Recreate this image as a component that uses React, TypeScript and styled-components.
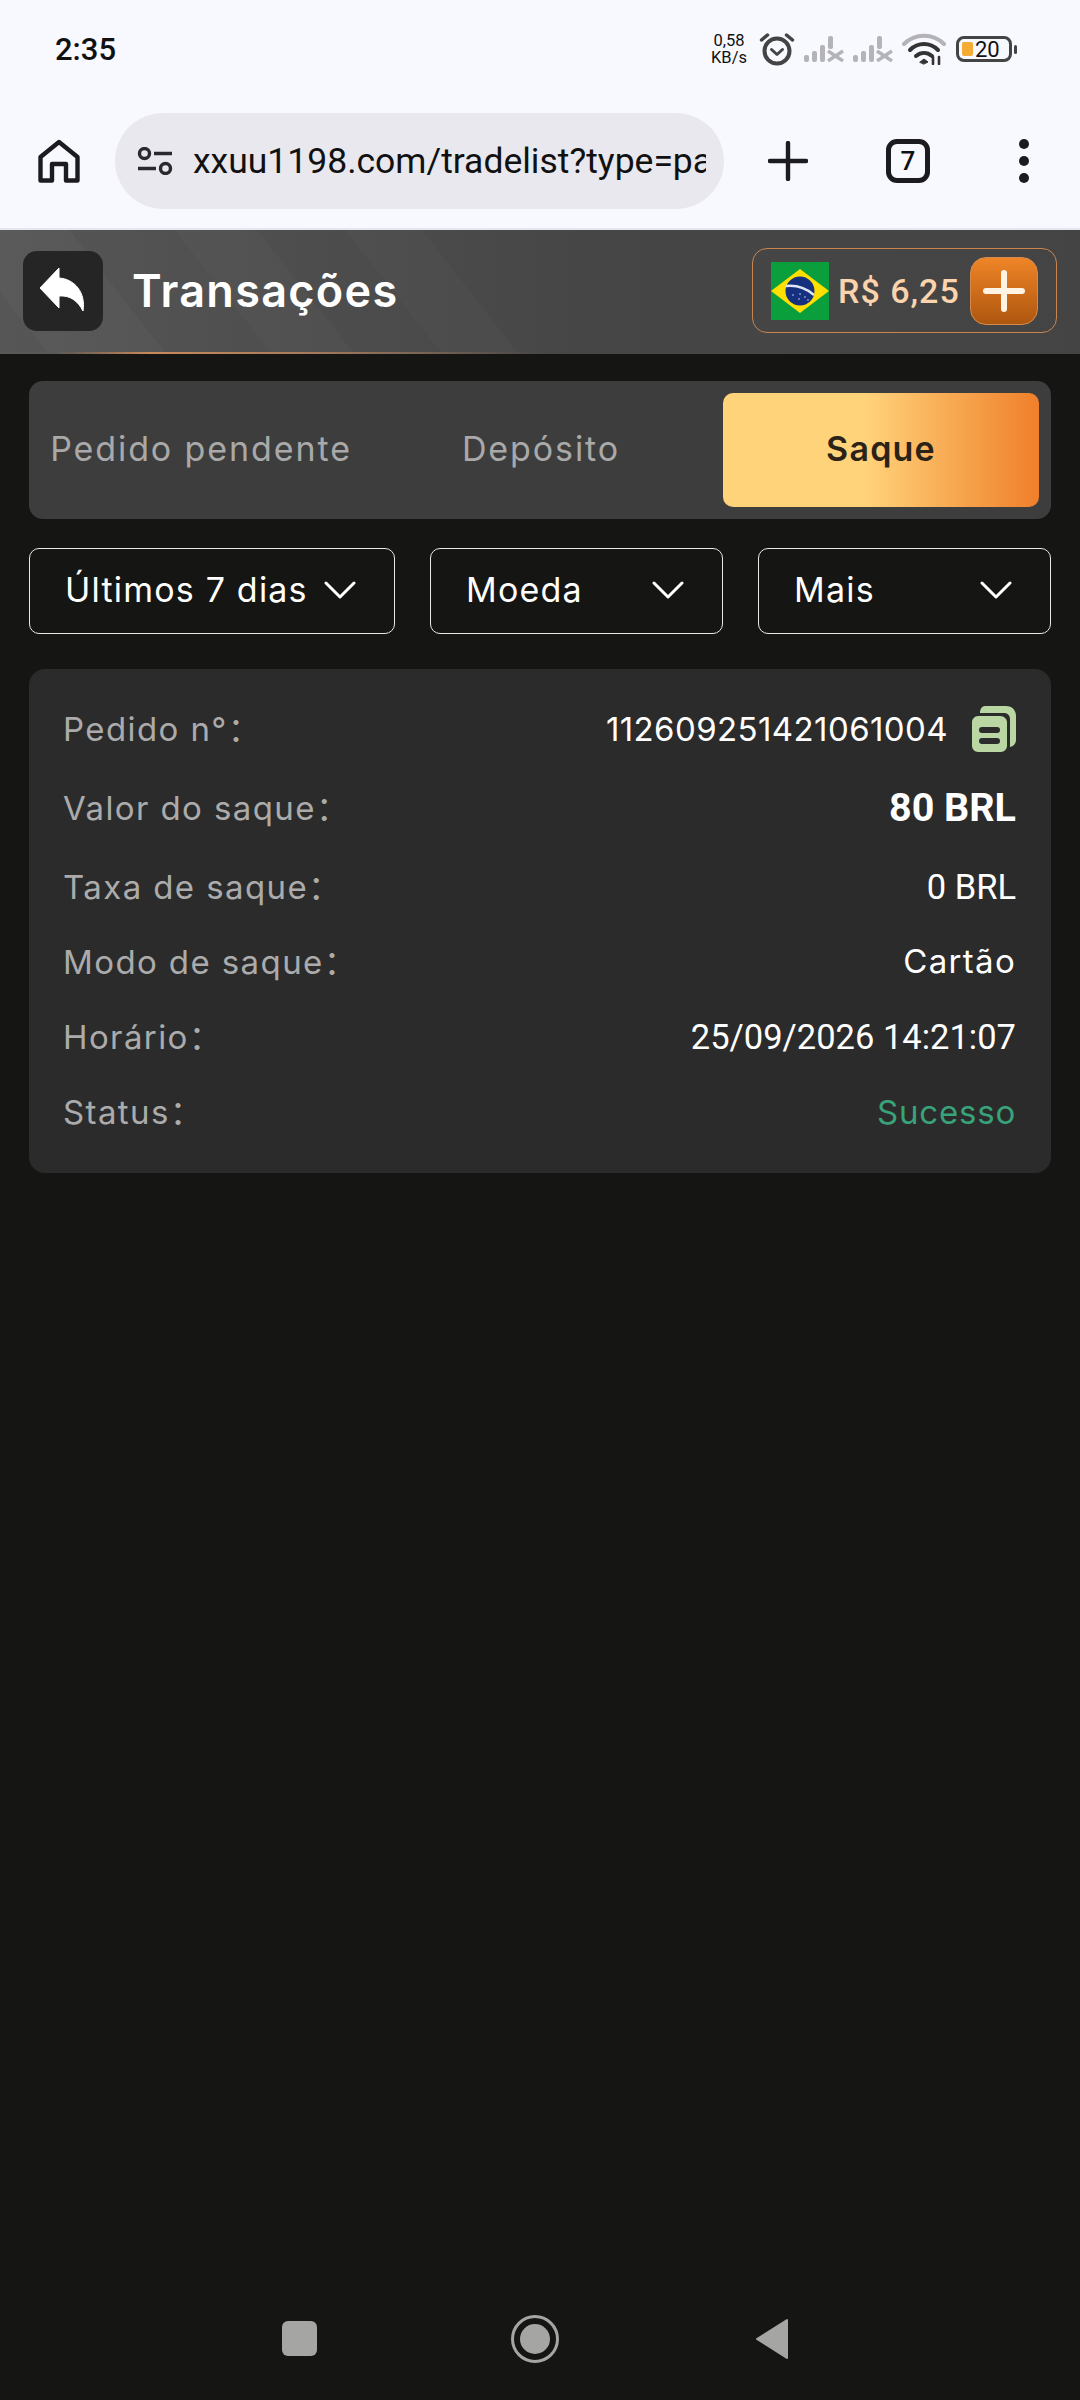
import React from 'react'
import styled, { createGlobalStyle } from 'styled-components'

const GlobalStyle = createGlobalStyle`
  html, body {
    margin: 0;
    padding: 0;
    background: #151513;
  }
  * {
    box-sizing: border-box;
  }
`

const Page = styled.div`
  width: 1080px;
  height: 2400px;
  display: flex;
  flex-direction: column;
  background: #151513;
  font-family: Inter, 'Noto Sans CJK SC', sans-serif;
  overflow: hidden;
`

const StatusBar = styled.div`
  height: 100px;
  flex-shrink: 0;
  display: flex;
  align-items: center;
  justify-content: space-between;
  padding: 0 63px 2px 55px;
  background: #f8f8ff;
`

const Clock = styled.span`
  font: 500 31px Roboto, sans-serif;
  color: #111;
`

const StatusIcons = styled.div`
  display: flex;
  align-items: center;
  gap: 9px;
`

const NetSpeed = styled.span`
  width: 38px;
  margin-right: 2px;
  font: 400 16.5px/17px Roboto, sans-serif;
  color: #111;
  text-align: center;
`

const BatteryWrap = styled.div`
  display: flex;
  align-items: center;
  gap: 2px;
  margin-left: 1px;
`

const BatteryBody = styled.div`
  width: 56px;
  height: 26px;
  display: flex;
  align-items: center;
  gap: 2px;
  padding: 3px;
  border: 3px solid #444;
  border-radius: 8px;
  font: 400 22px Roboto, sans-serif;
  color: #111;
`

const BatteryFill = styled.span`
  width: 11px;
  height: 100%;
  border-radius: 2px;
  background: #f5ac35;
`

const BatteryNub = styled.span`
  width: 3px;
  height: 9px;
  border-radius: 2px;
  background: #444;
`

const Toolbar = styled.div`
  height: 130px;
  flex-shrink: 0;
  display: flex;
  align-items: center;
  padding: 0 0 6px 38px;
  background: #f8f8ff;
  border-bottom: 2px solid #e6e6ee;
`

const HomeSlot = styled.div`
  width: 77px;
  display: flex;
`

const UrlPill = styled.div`
  width: 609px;
  height: 96px;
  display: flex;
  align-items: center;
  padding: 0 18px 0 22px;
  gap: 20px;
  border-radius: 48px;
  background: #e8e8ee;
`

const UrlText = styled.span`
  flex: 1;
  overflow: hidden;
  white-space: nowrap;
  font: 400 35.5px Roboto, sans-serif;
  color: #111;
`

const ToolbarButtons = styled.div`
  flex: 1;
  display: flex;
  align-items: center;
  padding-left: 44px;
`

const TabCount = styled.div`
  width: 44px;
  height: 44px;
  margin-left: 78px;
  display: flex;
  align-items: center;
  justify-content: center;
  border: 5px solid #1c1c20;
  border-radius: 11px;
  font: 500 26px Roboto, sans-serif;
  color: #111;
`

const MenuDots = styled.div`
  margin-left: 89px;
  display: flex;
  flex-direction: column;
  gap: 7px;
`

const MenuDot = styled.span`
  width: 10px;
  height: 10px;
  border-radius: 50%;
  background: #1c1c20;
`

const Header = styled.header`
  height: 124px;
  flex-shrink: 0;
  display: flex;
  align-items: center;
  justify-content: space-between;
  padding: 0 23px 1px 23px;
  border-bottom: 2px solid;
  border-image: linear-gradient(90deg, transparent 5%, #c98a5a 14%, #a87c5c 28%, transparent 50%) 1;
  background:
    linear-gradient(52deg,
      rgba(255,255,255,0) 0 4%,
      rgba(255,255,255,0.025) 4% 14%,
      rgba(255,255,255,0) 14% 23%,
      rgba(255,255,255,0.02) 23% 30%,
      rgba(255,255,255,0) 30% 37.5%,
      rgba(255,255,255,0.015) 37.5% 44%,
      rgba(255,255,255,0) 44% 100%),
    linear-gradient(90deg, #565656 0%, #4d4d4d 30%, #464646 55%, #444 100%);
`

const HeaderLeft = styled.div`
  display: flex;
  align-items: center;
  gap: 29px;
`

const BackButton = styled.button`
  width: 80px;
  height: 80px;
  display: flex;
  align-items: center;
  justify-content: center;
  padding: 0 2px 2px 0;
  border: 0;
  border-radius: 14px;
  background: #252525;
`

const Title = styled.h1`
  margin: 0;
  padding-bottom: 1px;
  font: 600 45px Inter, sans-serif;
  letter-spacing: 1.3px;
  color: #fff;
`

const Balance = styled.div`
  width: 305px;
  height: 85px;
  display: flex;
  align-items: center;
  padding: 0 18px;
  border: 1.5px solid #c98550;
  border-radius: 15px;
`

const BalanceText = styled.span`
  margin-left: 9px;
  flex: 1;
  font: 500 34px Roboto, sans-serif;
  letter-spacing: 1px;
  color: #fbd3ad;
  white-space: nowrap;
`

const AddButton = styled.button`
  width: 68px;
  height: 68px;
  flex-shrink: 0;
  display: flex;
  align-items: center;
  justify-content: center;
  padding: 0;
  border: 1px solid #d58a4c;
  border-radius: 16px;
  background: linear-gradient(180deg, #ef8527 0%, #ae560f 100%);
`

const Content = styled.main`
  flex: 1;
  display: flex;
  flex-direction: column;
  padding: 27px 29px 0;
`

const Tabs = styled.div`
  height: 138px;
  display: grid;
  grid-template-columns: repeat(3, 316px);
  gap: 24px;
  padding: 12px 12px 12px 14px;
  border-radius: 14px;
  background: #3d3d3d;
`

const Tab = styled.div<{ $active?: boolean }>`
  display: flex;
  align-items: center;
  justify-content: center;
  padding-bottom: 3px;
  border-radius: 10px;
  font-size: 34px;
  white-space: nowrap;
  letter-spacing: ${({ $active }) => ($active ? '1.2px' : '1.9px')};
  font-weight: ${({ $active }) => ($active ? 600 : 400)};
  color: ${({ $active }) => ($active ? '#2b2218' : '#a9a9a9')};
  background: ${({ $active }) =>
    $active ? 'linear-gradient(90deg, #ffd37a 0%, #ffd37a 45%, #f07f2a 100%)' : 'transparent'};
`

const Filters = styled.div`
  display: grid;
  grid-template-columns: 366px 293px 293px;
  gap: 35px;
  margin-top: 29px;
`

const Filter = styled.div`
  height: 86px;
  display: flex;
  align-items: center;
  justify-content: space-between;
  padding: 0 37px 3px 35px;
  border: 1.5px solid #e8e8e8;
  border-radius: 10px;
  font-size: 34px;
  letter-spacing: 1.2px;
  color: #fff;
  white-space: nowrap;
`

const Card = styled.section`
  margin-top: 35px;
  padding: 22px 35px 24px 34px;
  border-radius: 16px;
  background: #2b2b2b;
`

const Row = styled.div<{ $spaced?: boolean }>`
  height: 75px;
  margin-top: ${({ $spaced }) => ($spaced ? '4px' : '0')};
  display: flex;
  align-items: center;
  justify-content: space-between;
`

const Label = styled.span`
  padding-bottom: 3px;
  font-size: 33px;
  letter-spacing: 1.4px;
  color: #ababab;
`

const OrderValue = styled.span`
  display: flex;
  align-items: center;
  gap: 24px;
  font-size: 33px;
  letter-spacing: 0.4px;
  color: #fff;
`

const Value = styled.span<{ $strong?: boolean }>`
  font-family: Roboto, sans-serif;
  font-size: ${({ $strong }) => ($strong ? '39.5px' : '34.5px')};
  font-weight: ${({ $strong }) => ($strong ? 700 : 400)};
  color: #fff;
`

const PlainValue = styled.span`
  padding-bottom: 1px;
  font-size: 33px;
  letter-spacing: 1.3px;
  color: #fff;
`

const StatusValue = styled.span`
  font-size: 33px;
  letter-spacing: 0.8px;
  color: #38a27a;
`

const NavBar = styled.nav`
  height: 134px;
  flex-shrink: 0;
  display: flex;
  align-items: flex-start;
  padding: 49px 0 0 282px;
`

const NavSquare = styled.span`
  width: 35px;
  height: 35px;
  margin-top: 6px;
  border-radius: 6px;
  background: #a5a5a3;
`

const NavCircle = styled.span`
  width: 48px;
  height: 48px;
  margin-left: 194px;
  display: flex;
  align-items: center;
  justify-content: center;
  border: 3px solid #a5a5a3;
  border-radius: 50%;
`

const NavCircleDot = styled.span`
  width: 30px;
  height: 30px;
  border-radius: 50%;
  background: #a5a5a3;
`

const NavBack = styled.svg`
  margin-left: 196px;
  margin-top: 3px;
`

const Chevron = () => (
  <svg width="34" height="18" viewBox="0 0 34 18" fill="none" stroke="#fff" strokeWidth="3" strokeLinecap="round" strokeLinejoin="round">
    <path d="M3 2l14 14L31 2" />
  </svg>
)

const SignalMuted = () => (
  <svg width="40" height="26" viewBox="0 0 40 26" fill="#b4b4b8">
    <rect x="0" y="19" width="5" height="7" rx="2" />
    <rect x="8" y="15" width="5" height="11" rx="2" />
    <rect x="16" y="9" width="5" height="17" rx="2" />
    <rect x="24" y="0" width="5" height="13" rx="2" />
    <path d="M24 15l15 10M39 15L24 25" stroke="#b4b4b8" strokeWidth="3.4" fill="none" />
  </svg>
)

const Flag = () => (
  <svg width="58" height="58" viewBox="0 0 58 58" style={{ flexShrink: 0 }}>
    <rect width="58" height="58" fill="#0a9e3c" />
    <path d="M29 7l29 22-29 22L0 29z" fill="#fee000" />
    <circle cx="29" cy="29" r="14.5" fill="#14307f" />
    <path d="M15 24c10-1 20 2 28 9" fill="none" stroke="#dfe6f2" strokeWidth="2.4" />
    <g fill="#cdd8ee">
      <circle cx="22" cy="33" r="0.8" />
      <circle cx="28" cy="37" r="0.8" />
      <circle cx="34" cy="35" r="0.8" />
      <circle cx="29" cy="32" r="0.8" />
      <circle cx="37" cy="38" r="0.8" />
    </g>
  </svg>
)

export default function App() {
  return (
    <Page>
      <GlobalStyle />
      <StatusBar>
        <Clock>2:35</Clock>
        <StatusIcons>
          <NetSpeed>0,58<br />KB/s</NetSpeed>
          <svg width="36" height="34" viewBox="0 0 36 34" fill="none" stroke="#444" strokeLinecap="round">
            <circle cx="18" cy="19" r="12.5" strokeWidth="4" />
            <path d="M12.5 17.5l5.5 5 5.5-5" strokeWidth="3" strokeLinejoin="round" />
            <path d="M2.5 8l6-5M33.5 8l-6-5" strokeWidth="3.5" />
          </svg>
          <SignalMuted />
          <SignalMuted />
          <svg width="44" height="32" viewBox="0 0 44 32" fill="none" strokeLinecap="round">
            <path d="M2 11C13 0 31 0 42 11" stroke="#b4b4b8" strokeWidth="4" />
            <path d="M8 17c8-8 20-8 28 0" stroke="#333" strokeWidth="4" />
            <path d="M14 23c5-4 11-4 16 0" stroke="#333" strokeWidth="4" />
            <path d="M18 29l4-3 4 3-4 2z" fill="#333" stroke="#333" />
            <path d="M31 24v7M37 24v7" stroke="#333" strokeWidth="2.6" />
          </svg>
          <BatteryWrap>
            <BatteryBody>
              <BatteryFill />
              20
            </BatteryBody>
            <BatteryNub />
          </BatteryWrap>
        </StatusIcons>
      </StatusBar>

      <Toolbar>
        <HomeSlot>
          <svg width="42" height="44" viewBox="0 0 42 44" fill="none" stroke="#1c1c20" strokeWidth="4.4" strokeLinejoin="round">
            <path d="M2.500 18L21 3l18.500 15v23.500H28V25H14v16.500H2.500z" />
          </svg>
        </HomeSlot>
        <UrlPill>
          <svg width="36" height="28" viewBox="0 0 36 28" fill="none" stroke="#2a2a2e" strokeWidth="3.4" style={{ flexShrink: 0 }}>
            <circle cx="7.500" cy="6.500" r="5" />
            <path d="M17 6.500h18M1 21.500h18" />
            <circle cx="28.500" cy="21.500" r="5" />
          </svg>
          <UrlText>xxuu1198.com/tradelist?type=pay</UrlText>
        </UrlPill>
        <ToolbarButtons>
          <svg width="40" height="40" viewBox="0 0 40 40" stroke="#1c1c20" strokeWidth="4.4" strokeLinecap="round">
            <path d="M20 2v36M2 20h36" />
          </svg>
          <TabCount>7</TabCount>
          <MenuDots>
            <MenuDot />
            <MenuDot />
            <MenuDot />
          </MenuDots>
        </ToolbarButtons>
      </Toolbar>

      <Header>
        <HeaderLeft>
          <BackButton>
            <svg width="45" height="43" viewBox="0 0 45 43" fill="#fff">
              <path d="M19 0L0 20l19 20V28c11-1 19 5 24 15 3-18-8-32-24-33z" stroke="#fff" strokeLinejoin="round" />
            </svg>
          </BackButton>
          <Title>Transações</Title>
        </HeaderLeft>
        <Balance>
          <Flag />
          <BalanceText>R$ 6,25</BalanceText>
          <AddButton>
            <svg width="42" height="42" viewBox="0 0 42 42" stroke="#fff3e4" strokeWidth="6" strokeLinecap="round">
              <path d="M21 3v36M3 21h36" />
            </svg>
          </AddButton>
        </Balance>
      </Header>

      <Content>
        <Tabs>
          <Tab>Pedido pendente</Tab>
          <Tab>Depósito</Tab>
          <Tab $active>Saque</Tab>
        </Tabs>
        <Filters>
          <Filter>Últimos 7 dias<Chevron /></Filter>
          <Filter>Moeda<Chevron /></Filter>
          <Filter>Mais<Chevron /></Filter>
        </Filters>
        <Card>
          <Row>
            <Label>Pedido n°：</Label>
            <OrderValue>
              112609251421061004
              <svg width="44" height="46" viewBox="0 0 44 46" fill="#b9d6a3">
                <path d="M13 0h21c6 0 10 4 10 10v24c0 3-2 6-6 7V13c0-4-3-6-6-6H8c0-4 2-7 5-7z" />
                <path fillRule="evenodd" d="M6 10h22c4 0 7 3 7 6v24c0 3-3 6-6 6H6c-3 0-6-3-6-6V16c0-3 3-6 6-6zm4 11c-2 0-3 1-3 3s1 3 3 3h15c2 0 3-1 3-3s-1-3-3-3zm0 11c-2 0-3 1-3 3s1 3 3 3h15c2 0 3-1 3-3s-1-3-3-3z" />
              </svg>
            </OrderValue>
          </Row>
          <Row $spaced>
            <Label>Valor do saque：</Label>
            <Value $strong>80 BRL</Value>
          </Row>
          <Row $spaced>
            <Label>Taxa de saque：</Label>
            <Value>0 BRL</Value>
          </Row>
          <Row>
            <Label>Modo de saque：</Label>
            <PlainValue>Cartão</PlainValue>
          </Row>
          <Row>
            <Label>Horário：</Label>
            <Value>25/09/2026 14:21:07</Value>
          </Row>
          <Row>
            <Label>Status：</Label>
            <StatusValue>Sucesso</StatusValue>
          </Row>
        </Card>
      </Content>

      <NavBar>
        <NavSquare />
        <NavCircle>
          <NavCircleDot />
        </NavCircle>
        <NavBack width="34" height="42" viewBox="0 0 34 42" fill="#a5a5a3" stroke="#a5a5a3" strokeWidth="2" strokeLinejoin="round">
          <path d="M32 2v38L2 21z" />
        </NavBack>
      </NavBar>
    </Page>
  )
}
